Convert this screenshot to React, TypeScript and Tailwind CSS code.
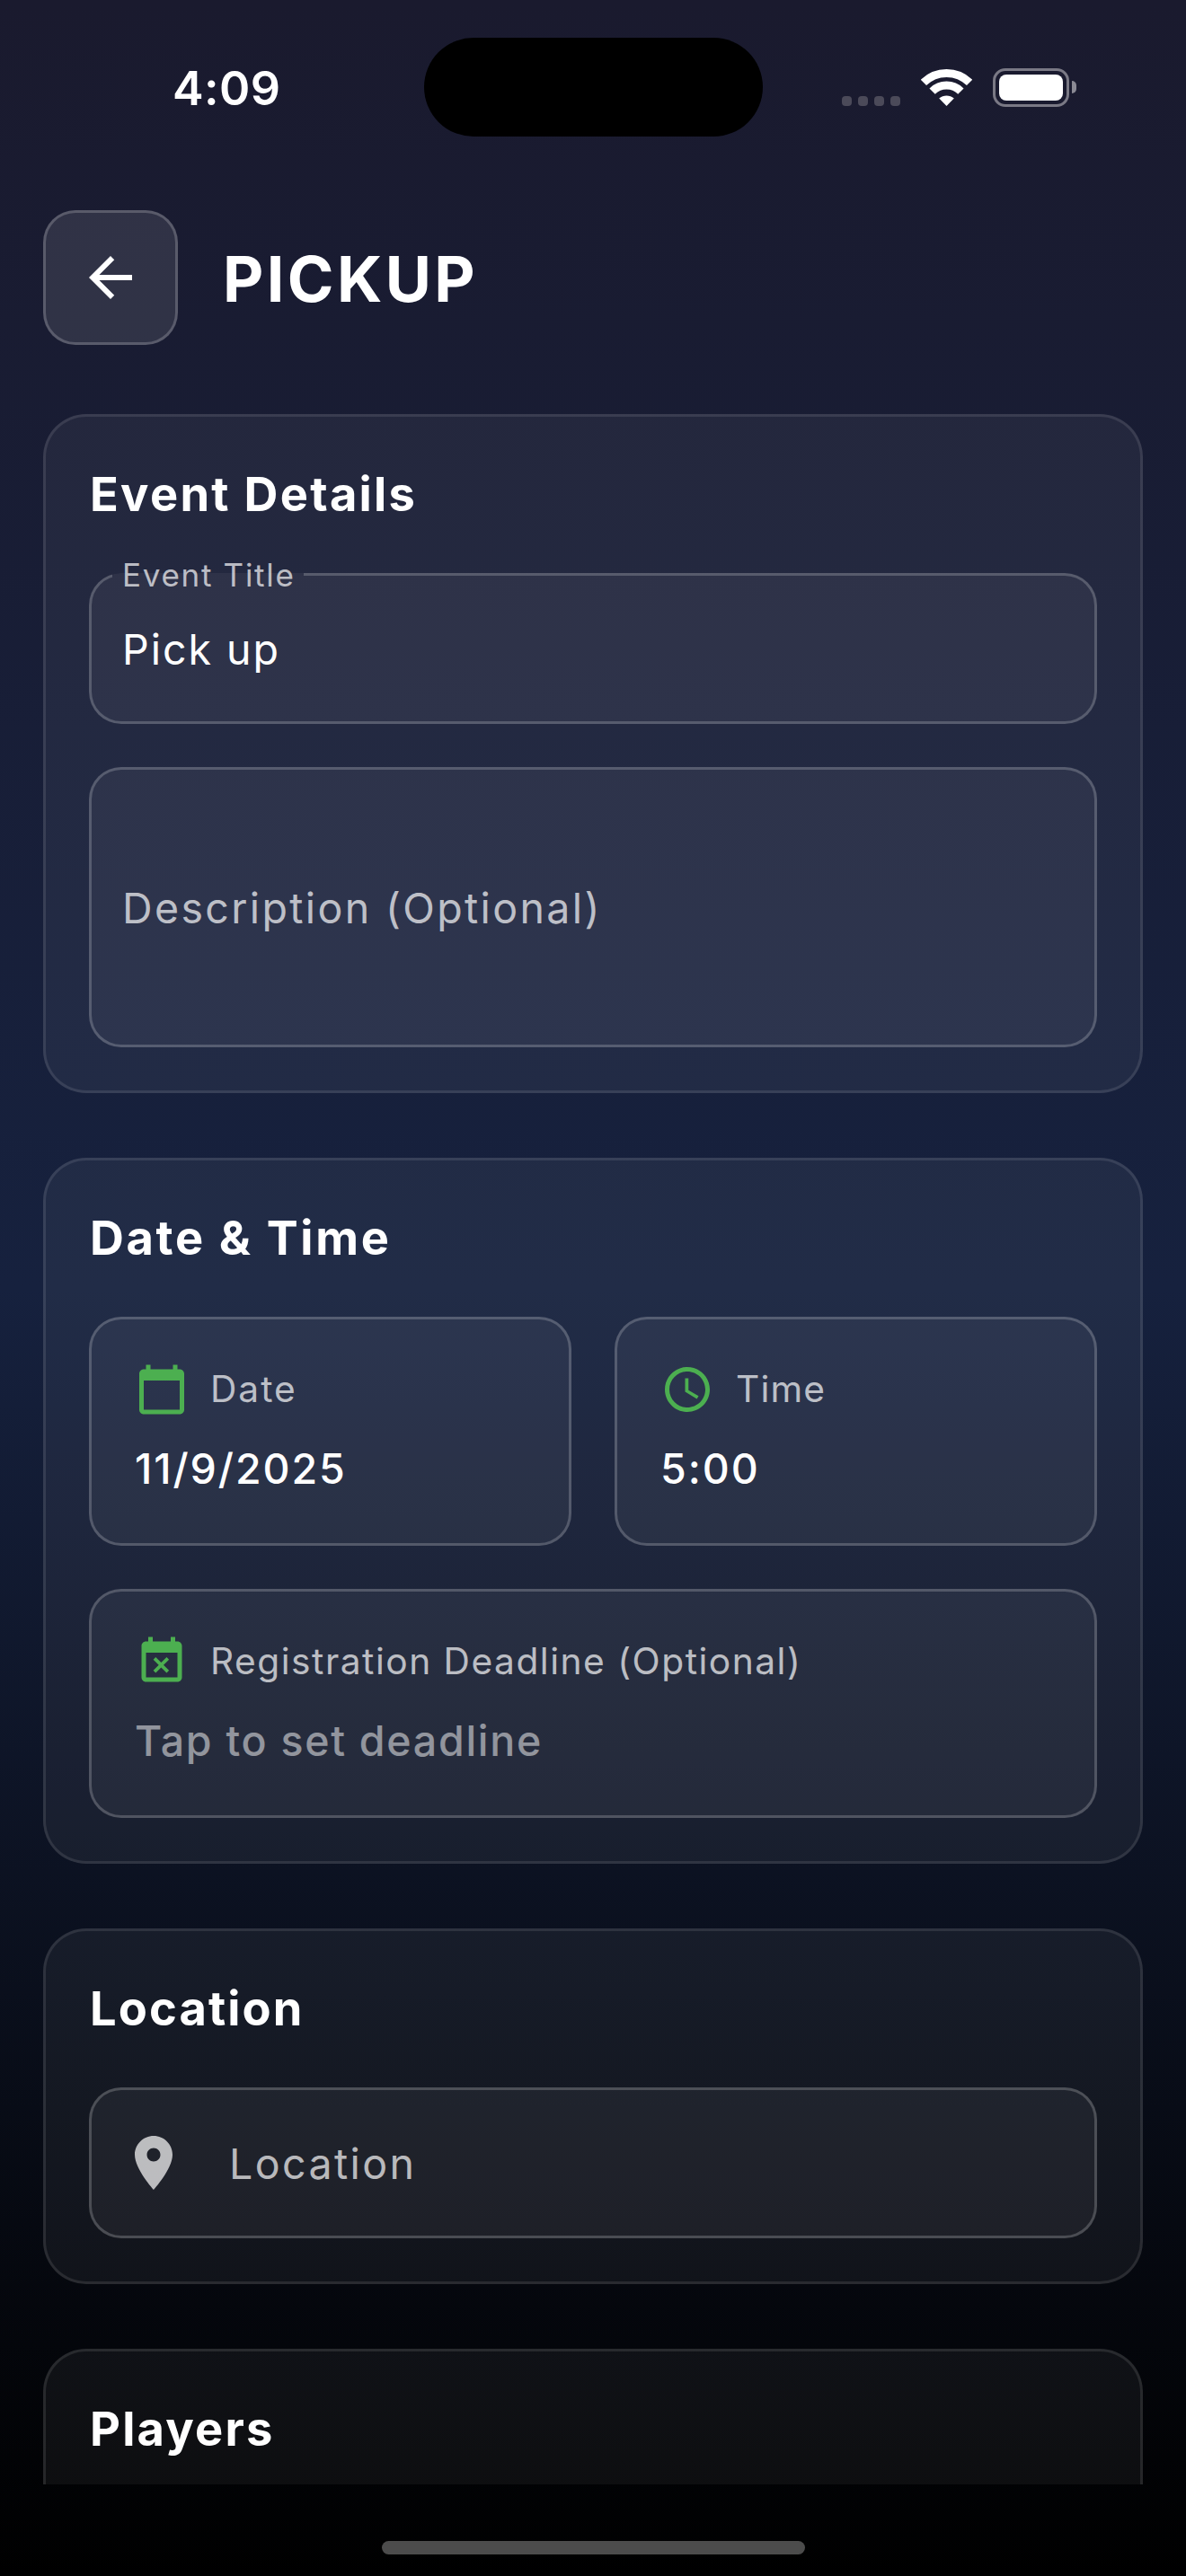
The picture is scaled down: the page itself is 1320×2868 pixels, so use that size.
import type { ReactNode } from "react";

function Icon({ d, className }: { d: string; className: string }) {
  return (
    <svg viewBox="0 0 24 24" fill="currentColor" className={className} aria-hidden="true">
      <path d={d} />
    </svg>
  );
}

const ARROW_BACK = "M20 11H7.83l5.59-5.59L12 4l-8 8 8 8 1.41-1.41L7.83 13H20v-2z";
const CALENDAR =
  "M20 3h-1V1h-2v2H7V1H5v2H4c-1.1 0-2 .9-2 2v16c0 1.1.9 2 2 2h16c1.1 0 2-.9 2-2V5c0-1.1-.9-2-2-2zm0 18H4V8h16v13z";
const CLOCK =
  "M11.99 2C6.47 2 2 6.48 2 12s4.47 10 9.99 10C17.52 22 22 17.52 22 12S17.52 2 11.99 2zM12 20c-4.42 0-8-3.58-8-8s3.58-8 8-8 8 3.58 8 8-3.58 8-8 8zm.5-13H11v6l5.25 3.15.75-1.23-4.5-2.67z";
const EVENT_BUSY =
  "M9.31 17l2.44-2.44L14.19 17l1.06-1.06-2.44-2.44 2.44-2.44L14.19 10l-2.44 2.44L9.31 10l-1.06 1.06 2.44 2.44-2.44 2.44L9.31 17zM19 3h-1V1h-2v2H8V1H6v2H5c-1.11 0-1.99.9-1.99 2L3 19c0 1.1.89 2 2 2h14c1.1 0 2-.9 2-2V5c0-1.1-.9-2-2-2zm0 16H5V8h14v11z";
const PIN =
  "M12 2C8.13 2 5 5.13 5 9c0 5.25 7 13 7 13s7-7.75 7-13c0-3.87-3.13-7-7-7zm0 9.5c-1.38 0-2.5-1.12-2.5-2.5s1.12-2.5 2.5-2.5 2.5 1.12 2.5 2.5-1.12 2.5-2.5 2.5z";

function StatusBar() {
  return (
    <div className="flex h-[194px] items-center pl-[192px]">
      <div className="w-[280px] pt-[3px] text-[52px] leading-none font-semibold tracking-[0.4px]">4:09</div>
      <div className="h-[110px] w-[377px] rounded-full bg-black" />
      <div className="ml-[88px] flex h-[43px] items-end">
        <div className="mb-px flex gap-[7px]">
          {[0, 1, 2, 3].map((i) => (
            <span key={i} className="size-[11px] rounded-[4px] bg-[#4b4a59]" />
          ))}
        </div>
        <svg viewBox="0 0 57 42" className="mb-px ml-[23px] h-[42px] w-[57px]" aria-hidden="true">
          <g fill="none" stroke="#fff" strokeWidth="9">
            <path d="M2.9 15.9A36.6 36.6 0 0 1 54.1 15.9" />
            <path d="M12.6 25.6A22.6 22.6 0 0 1 44.4 25.6" />
          </g>
          <path d="M28.5 42L20.2 33.6A12.4 12.4 0 0 1 36.8 33.6Z" fill="#fff" />
        </svg>
        <div className="ml-[23px] flex items-center gap-[3px]">
          <div className="h-[43px] w-[85px] rounded-[14px] border-[3px] border-[#7a7985] p-1">
            <div className="h-full rounded-[8px] bg-white" />
          </div>
          <div className="h-[14px] w-[5px] rounded-r-full bg-[#8a8994]" />
        </div>
      </div>
    </div>
  );
}

function Card({ title, titleClass, children }: { title: string; titleClass: string; children?: ReactNode }) {
  return (
    <section className="rounded-[48px] border-[3px] border-white/10 bg-white/5 p-12">
      <h2 className={`mb-[50px] ml-px text-[52.4px] leading-[76px] font-bold ${titleClass}`}>{title}</h2>
      {children}
    </section>
  );
}

function Picker({ icon, label, labelClass, value, valueClass }: {
  icon: string;
  label: string;
  labelClass: string;
  value: string;
  valueClass: string;
}) {
  return (
    <div className="flex-1 rounded-[36px] border-[3px] border-white/20 bg-white/5 p-12">
      <div className="mb-6 flex items-center gap-6">
        <Icon d={icon} className="size-[60px] shrink-0 text-[#4caf50]" />
        <span className={`text-[40.7px] leading-[60px] whitespace-nowrap text-white/70 ${labelClass}`}>{label}</span>
      </div>
      <div className={`text-[46.5px] leading-[69px] font-medium ${valueClass}`}>{value}</div>
    </div>
  );
}

export default function App() {
  return (
    <div className="flex h-[2868px] w-[1320px] flex-col overflow-hidden bg-[linear-gradient(180deg,#1a1a2e_0%,#16213e_50%,#000000_100%)] font-['Inter',sans-serif] text-white">
      <StatusBar />

      <header className="mt-10 flex items-center gap-[50px] px-12">
        <button className="flex size-[150px] items-center justify-center rounded-[36px] border-[3px] border-white/20 bg-white/10">
          <Icon d={ARROW_BACK} className="size-[72px]" />
        </button>
        <h1 className="pt-[3px] text-[70px] leading-none font-bold tracking-[3.4px]">PICKUP</h1>
      </header>

      <main className="mt-[77px] flex h-[2305px] flex-col gap-[72px] overflow-hidden px-12">
        <Card title="Event Details" titleClass="tracking-[2.3px]">
          <fieldset className="-mt-5 h-[188px] min-w-0 rounded-[36px] border-[3px] border-white/20 bg-white/5 pl-[23px]">
            <legend className="h-[43px] w-[213px] pl-[11px] text-[35px] leading-[45px] tracking-[1.7px] text-white/70">
              Event Title
            </legend>
            <div className="pl-[11px] text-[46.5px] leading-[124px] tracking-[2px]">Pick up</div>
          </fieldset>
          <div className="mt-12 flex h-[312px] items-center rounded-[36px] border-[3px] border-white/20 bg-white/5 px-[34px] pt-[3px] text-[46.5px] tracking-[2.36px] text-white/70">
            Description (Optional)
          </div>
        </Card>

        <Card title="Date & Time" titleClass="tracking-[2.65px]">
          <div className="mb-12 flex gap-12">
            <Picker icon={CALENDAR} label="Date" labelClass="tracking-[2px]" value="11/9/2025" valueClass="tracking-[1.93px]" />
            <Picker icon={CLOCK} label="Time" labelClass="tracking-[1.2px]" value="5:00" valueClass="tracking-[2px]" />
          </div>
          <Picker
            icon={EVENT_BUSY}
            label="Registration Deadline (Optional)"
            labelClass="tracking-[1.5px]"
            value="Tap to set deadline"
            valueClass="tracking-[1.72px] text-white/50"
          />
        </Card>

        <Card title="Location" titleClass="tracking-[2.1px]">
          <div className="flex h-[168px] items-center gap-12 rounded-[36px] border-[3px] border-white/20 bg-white/5 px-[33px] text-white/70">
            <Icon d={PIN} className="size-[72px]" />
            <span className="pt-[3px] text-[46.5px] tracking-[2.4px]">Location</span>
          </div>
        </Card>

        <Card title="Players" titleClass="tracking-[2.2px]" />
      </main>

      <div className="mx-auto mt-[63px] h-[15px] w-[471px] shrink-0 rounded-full bg-[#4c4c4c]" />
    </div>
  );
}
